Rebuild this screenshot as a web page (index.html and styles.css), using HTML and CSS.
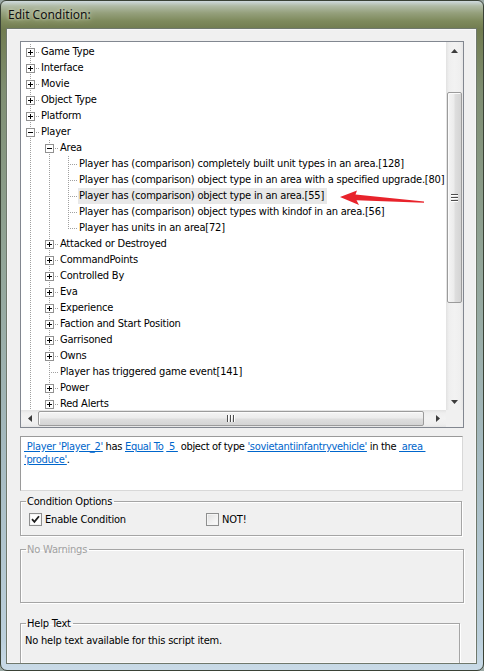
FILE: index.html
```html
<!DOCTYPE html>
<html>
<head>
<meta charset="utf-8">
<title>Edit Condition</title>
<link rel="stylesheet" href="styles.css">
</head>
<body>
<div class="win">
  <div class="titlebar"><span class="title">Edit Condition:</span></div>
  <div class="client">
    <div class="tree">
      <div class="tree-rows">
        <div class="row"><span class="x plus"><span class="box"></span></span><span class="lbl">Game Type</span></div>
        <div class="row"><span class="x plus"><span class="box"></span></span><span class="lbl">Interface</span></div>
        <div class="row"><span class="x plus"><span class="box"></span></span><span class="lbl">Movie</span></div>
        <div class="row"><span class="x plus"><span class="box"></span></span><span class="lbl">Object Type</span></div>
        <div class="row"><span class="x plus"><span class="box"></span></span><span class="lbl">Platform</span></div>
        <div class="row"><span class="x minus"><span class="box"></span></span><span class="lbl">Player</span></div>
        <div class="row"><span class="i"></span><span class="x minus"><span class="box"></span></span><span class="lbl">Area</span></div>
        <div class="row"><span class="i"></span><span class="i"></span><span class="t"></span><span class="lbl">Player has (comparison) completely built unit types in an area.[128]</span></div>
        <div class="row"><span class="i"></span><span class="i"></span><span class="t"></span><span class="lbl">Player has (comparison) object type in an area with a specified upgrade.[80]</span></div>
        <div class="row"><span class="i"></span><span class="i"></span><span class="t"></span><span class="lbl sel">Player has (comparison) object type in an area.[55]</span></div>
        <div class="row"><span class="i"></span><span class="i"></span><span class="t"></span><span class="lbl">Player has (comparison) object types with kindof in an area.[56]</span></div>
        <div class="row"><span class="i"></span><span class="i"></span><span class="t end"></span><span class="lbl">Player has units in an area[72]</span></div>
        <div class="row"><span class="i"></span><span class="x plus"><span class="box"></span></span><span class="lbl">Attacked or Destroyed</span></div>
        <div class="row"><span class="i"></span><span class="x plus"><span class="box"></span></span><span class="lbl">CommandPoints</span></div>
        <div class="row"><span class="i"></span><span class="x plus"><span class="box"></span></span><span class="lbl">Controlled By</span></div>
        <div class="row"><span class="i"></span><span class="x plus"><span class="box"></span></span><span class="lbl">Eva</span></div>
        <div class="row"><span class="i"></span><span class="x plus"><span class="box"></span></span><span class="lbl">Experience</span></div>
        <div class="row"><span class="i"></span><span class="x plus"><span class="box"></span></span><span class="lbl">Faction and Start Position</span></div>
        <div class="row"><span class="i"></span><span class="x plus"><span class="box"></span></span><span class="lbl">Garrisoned</span></div>
        <div class="row"><span class="i"></span><span class="x plus"><span class="box"></span></span><span class="lbl">Owns</span></div>
        <div class="row"><span class="i"></span><span class="t"></span><span class="lbl">Player has triggered game event[141]</span></div>
        <div class="row"><span class="i"></span><span class="x plus"><span class="box"></span></span><span class="lbl">Power</span></div>
        <div class="row"><span class="i"></span><span class="x plus"><span class="box"></span></span><span class="lbl">Red Alerts</span></div>
      </div>
      <div class="vscroll">
        <div class="sbtn"><svg width="7" height="4" viewBox="0 0 7 4"><polygon points="3.5,0 7,4 0,4" fill="#3c3c3c"/></svg></div>
        <div class="vgap-top"></div>
        <div class="vthumb"><span class="vgrip"></span></div>
        <div class="vgap-bot"></div>
        <div class="sbtn"><svg width="7" height="4" viewBox="0 0 7 4"><polygon points="0,0 7,0 3.5,4" fill="#3c3c3c"/></svg></div>
      </div>
      <div class="hscroll">
        <div class="sbtn"><svg width="4" height="7" viewBox="0 0 4 7"><polygon points="4,0 4,7 0,3.5" fill="#3c3c3c"/></svg></div>
        <div class="hthumb"><span class="hgrip"></span></div>
        <div class="hgap"></div>
        <div class="sbtn"><svg width="4" height="7" viewBox="0 0 4 7"><polygon points="0,0 4,3.5 0,7" fill="#3c3c3c"/></svg></div>
      </div>
      <div class="corner"></div>
    </div>

    <div class="desc"><a class="lnk">&nbsp;Player 'Player_2'</a> has <a class="lnk">Equal To</a> <a class="lnk">&nbsp;5&nbsp;</a> object of type <a class="lnk">'sovietantiinfantryvehicle'</a> in the <a class="lnk">&nbsp;area&nbsp;</a><br><a class="lnk">'produce'</a>.</div>

    <fieldset class="grp grp-opts">
      <legend>Condition Options</legend>
      <div class="opts">
        <label class="opt opt-first"><span class="cb on"><svg width="9" height="9" viewBox="0 0 9 9"><path d="M1 4.2 L3.4 6.8 L8 1.2" fill="none" stroke="#1e1e1e" stroke-width="1.8"/></svg></span>Enable Condition</label>
        <label class="opt"><span class="cb"></span>NOT!</label>
      </div>
    </fieldset>

    <fieldset class="grp grp-warn">
      <legend class="dis">No Warnings</legend>
    </fieldset>

    <fieldset class="grp grp-help">
      <legend>Help Text</legend>
      <div class="help">No help text available for this script item.</div>
    </fieldset>
  </div>
  <svg class="annot" width="484" height="671" viewBox="0 0 484 671">
    <polygon points="340,197 357,190.5 355.5,194.5 424,201.4 424,202.8 356.5,200.2 359,205" fill="#e8232b"/>
  </svg>
</div>
</body>
</html>
```

FILE: styles.css
```css
* { box-sizing: border-box; }
html, body { margin: 0; padding: 0; }
body {
  width: 484px;
  height: 671px;
  overflow: hidden;
  font-family: "DejaVu Sans Condensed", "DejaVu Sans", sans-serif;
  font-size: 11px;
  letter-spacing: -0.2px;
  color: #000;
  background: #9aa8a4;
}

.win {
  position: relative;
  width: 484px;
  height: 671px;
  display: flex;
  flex-direction: column;
  border: 1px solid #3a4236;
  border-radius: 6px 6px 7px 7px;
  background:
    linear-gradient(to bottom, #cfdade 0, #b0bba6 5px, #95a07c 12px, #7e8a5c 20px, #717c50 28px, #7f8e72 90px, #91a496 250px, #a5bac0 450px, #bcd0dc 640px, #cadbe8 671px);
  overflow: hidden;
}

.titlebar {
  height: 28px;
  flex: none;
  display: flex;
  align-items: center;
  padding: 0 0 2px 7px;
}
.title {
  font-family: "Noto Sans", "Open Sans", sans-serif;
  font-size: 12px;
  letter-spacing: 0;
  color: #101010;
  text-shadow: 0 0 7px rgba(225,232,210,.95), 0 0 3px rgba(225,232,210,.8);
}

.client {
  flex: 1;
  margin: 0 7px 7px 6px;
  background: #f0f0f0;
  box-shadow: 0 0 0 1px #6f786c, inset 0 0 0 1px #f7f7f7;
  padding: 12px 0 0 13px;
  overflow: hidden;
}

/* ---------- tree ---------- */
.tree {
  width: 444px;
  height: 387px;
  border: 1px solid #828790;
  background: #fff;
  display: grid;
  grid-template-columns: 425px 17px;
  grid-template-rows: 368px 17px;
}
.tree-rows {
  padding-top: 2px;
  overflow: hidden;
}
.row {
  display: flex;
  height: 16px;
  white-space: nowrap;
}
.i, .x, .t {
  flex: none;
  width: 19px;
  height: 16px;
}
.i {
  background: repeating-linear-gradient(to bottom, #a0a0a0 0 1px, transparent 1px 2px) 9px 0 / 1px 16px no-repeat;
}
.x, .t {
  background:
    repeating-linear-gradient(to right, #a0a0a0 0 1px, transparent 1px 2px) 11px 8px / 8px 1px no-repeat,
    repeating-linear-gradient(to bottom, #a0a0a0 0 1px, transparent 1px 2px) 9px 0 / 1px 16px no-repeat;
}
.t.end {
  background:
    repeating-linear-gradient(to right, #a0a0a0 0 1px, transparent 1px 2px) 11px 8px / 8px 1px no-repeat,
    repeating-linear-gradient(to bottom, #a0a0a0 0 1px, transparent 1px 2px) 9px 0 / 1px 9px no-repeat;
}
.x { padding: 4px 0 0 5px; }
.box {
  display: block;
  width: 9px;
  height: 9px;
  border: 1px solid #919191;
  background-color: #fff;
}
.plus .box {
  background:
    linear-gradient(#000, #000) 1px 3px / 5px 1px no-repeat,
    linear-gradient(#000, #000) 3px 1px / 1px 5px no-repeat,
    #fff;
}
.minus .box {
  background: linear-gradient(#000, #000) 1px 3px / 5px 1px no-repeat, #fff;
}
.lbl {
  line-height: 16px;
  padding: 0 3px 0 1px;
}
.lbl.sel { background: #e8e8e8; }

/* ---------- scrollbars ---------- */
.vscroll {
  display: flex;
  flex-direction: column;
  background: linear-gradient(to right, #e2e2e2 0, #efefef 3px, #f2f2f2 50%, #efefef 14px, #e6e6e6 17px);
}
.sbtn {
  flex: none;
  width: 17px;
  height: 17px;
  display: flex;
  align-items: center;
  justify-content: center;
}
.vgap-top { flex: none; height: 33px; }
.vthumb {
  flex: none;
  height: 211px;
  margin: 0 1px;
  border: 1px solid #9b9b9b;
  border-radius: 2px;
  background: linear-gradient(to right, #f4f4f4 0, #ececec 45%, #dedede 55%, #d4d4d4 100%);
  box-shadow: inset 1px 1px 0 #fbfbfb;
  display: flex;
  align-items: center;
  justify-content: center;
}
.vgrip {
  width: 7px;
  height: 8px;
  background:
    linear-gradient(#4e4e4e, #4e4e4e) 0 0 / 7px 1px no-repeat,
    linear-gradient(#fff, #fff) 0 1px / 7px 1px no-repeat,
    linear-gradient(#4e4e4e, #4e4e4e) 0 3px / 7px 1px no-repeat,
    linear-gradient(#fff, #fff) 0 4px / 7px 1px no-repeat,
    linear-gradient(#4e4e4e, #4e4e4e) 0 6px / 7px 1px no-repeat,
    linear-gradient(#fff, #fff) 0 7px / 7px 1px no-repeat;
}
.vgap-bot { flex: 1; }

.hscroll {
  display: flex;
  background: linear-gradient(to bottom, #e2e2e2 0, #efefef 3px, #f2f2f2 50%, #efefef 14px, #e6e6e6 17px);
}
.hthumb {
  flex: none;
  width: 386px;
  margin: 1px 0;
  border: 1px solid #9b9b9b;
  border-radius: 2px;
  background: linear-gradient(to bottom, #f4f4f4 0, #ececec 45%, #dedede 55%, #d4d4d4 100%);
  box-shadow: inset 1px 1px 0 #fbfbfb;
  display: flex;
  align-items: center;
  justify-content: center;
}
.hgrip {
  width: 8px;
  height: 7px;
  background:
    linear-gradient(#4e4e4e, #4e4e4e) 0 0 / 1px 7px no-repeat,
    linear-gradient(#fff, #fff) 1px 0 / 1px 7px no-repeat,
    linear-gradient(#4e4e4e, #4e4e4e) 3px 0 / 1px 7px no-repeat,
    linear-gradient(#fff, #fff) 4px 0 / 1px 7px no-repeat,
    linear-gradient(#4e4e4e, #4e4e4e) 6px 0 / 1px 7px no-repeat,
    linear-gradient(#fff, #fff) 7px 0 / 1px 7px no-repeat;
}
.hgap { flex: 1; }
.corner { background: #f0f0f0; }

/* ---------- description ---------- */
.desc {
  margin-top: 8px;
  width: 443px;
  height: 55px;
  background: #fff;
  border: 1px solid;
  border-color: #9a9a9a #d8d8d8 #d8d8d8 #9a9a9a;
  padding: 3px 3px 0 3px;
  line-height: 13px;
  letter-spacing: -0.32px;
  white-space: nowrap;
}
.lnk {
  color: #0066cc;
  text-decoration: underline;
}

/* ---------- group boxes ---------- */
.grp {
  margin: 0;
  min-width: 0;
  border: 1px solid #a5a5a5;
  box-shadow: 1px 1px 0 #fff, inset 1px 1px 0 #fff;
  padding: 0;
}
.grp legend {
  margin-left: 5px;
  padding: 0 2px 0 1px;
  line-height: 13px;
  font-size: 11px;
}
.grp legend.dis { color: #a0a0a0; }

.grp-opts {
  margin-top: 4px;
  width: 442px;
}
.opts {
  display: flex;
  height: 13px;
  margin: 5px 0 9px 8px;
}
.opt {
  display: flex;
  align-items: center;
  gap: 3px;
  line-height: 13px;
}
.opt-first { width: 177px; }
.cb {
  width: 13px;
  height: 13px;
  border: 1px solid #8e8f8f;
  background: linear-gradient(135deg, #dedede 0, #f2f2f2 60%, #fbfbfb 100%);
  box-shadow: inset 0 0 0 1px #f4f4f4;
  display: flex;
  align-items: center;
  justify-content: center;
}
.cb.on { background: #fff; }

.grp-warn {
  margin-top: 7px;
  width: 444px;
  height: 60px;
}
.grp-help {
  margin-top: 14px;
  width: 440px;
  height: 70px;
}
.help {
  line-height: 13px;
  margin: 4px 0 0 4px;
}

/* ---------- annotation ---------- */
.annot {
  position: absolute;
  left: -1px;
  top: -1px;
  pointer-events: none;
}
```
